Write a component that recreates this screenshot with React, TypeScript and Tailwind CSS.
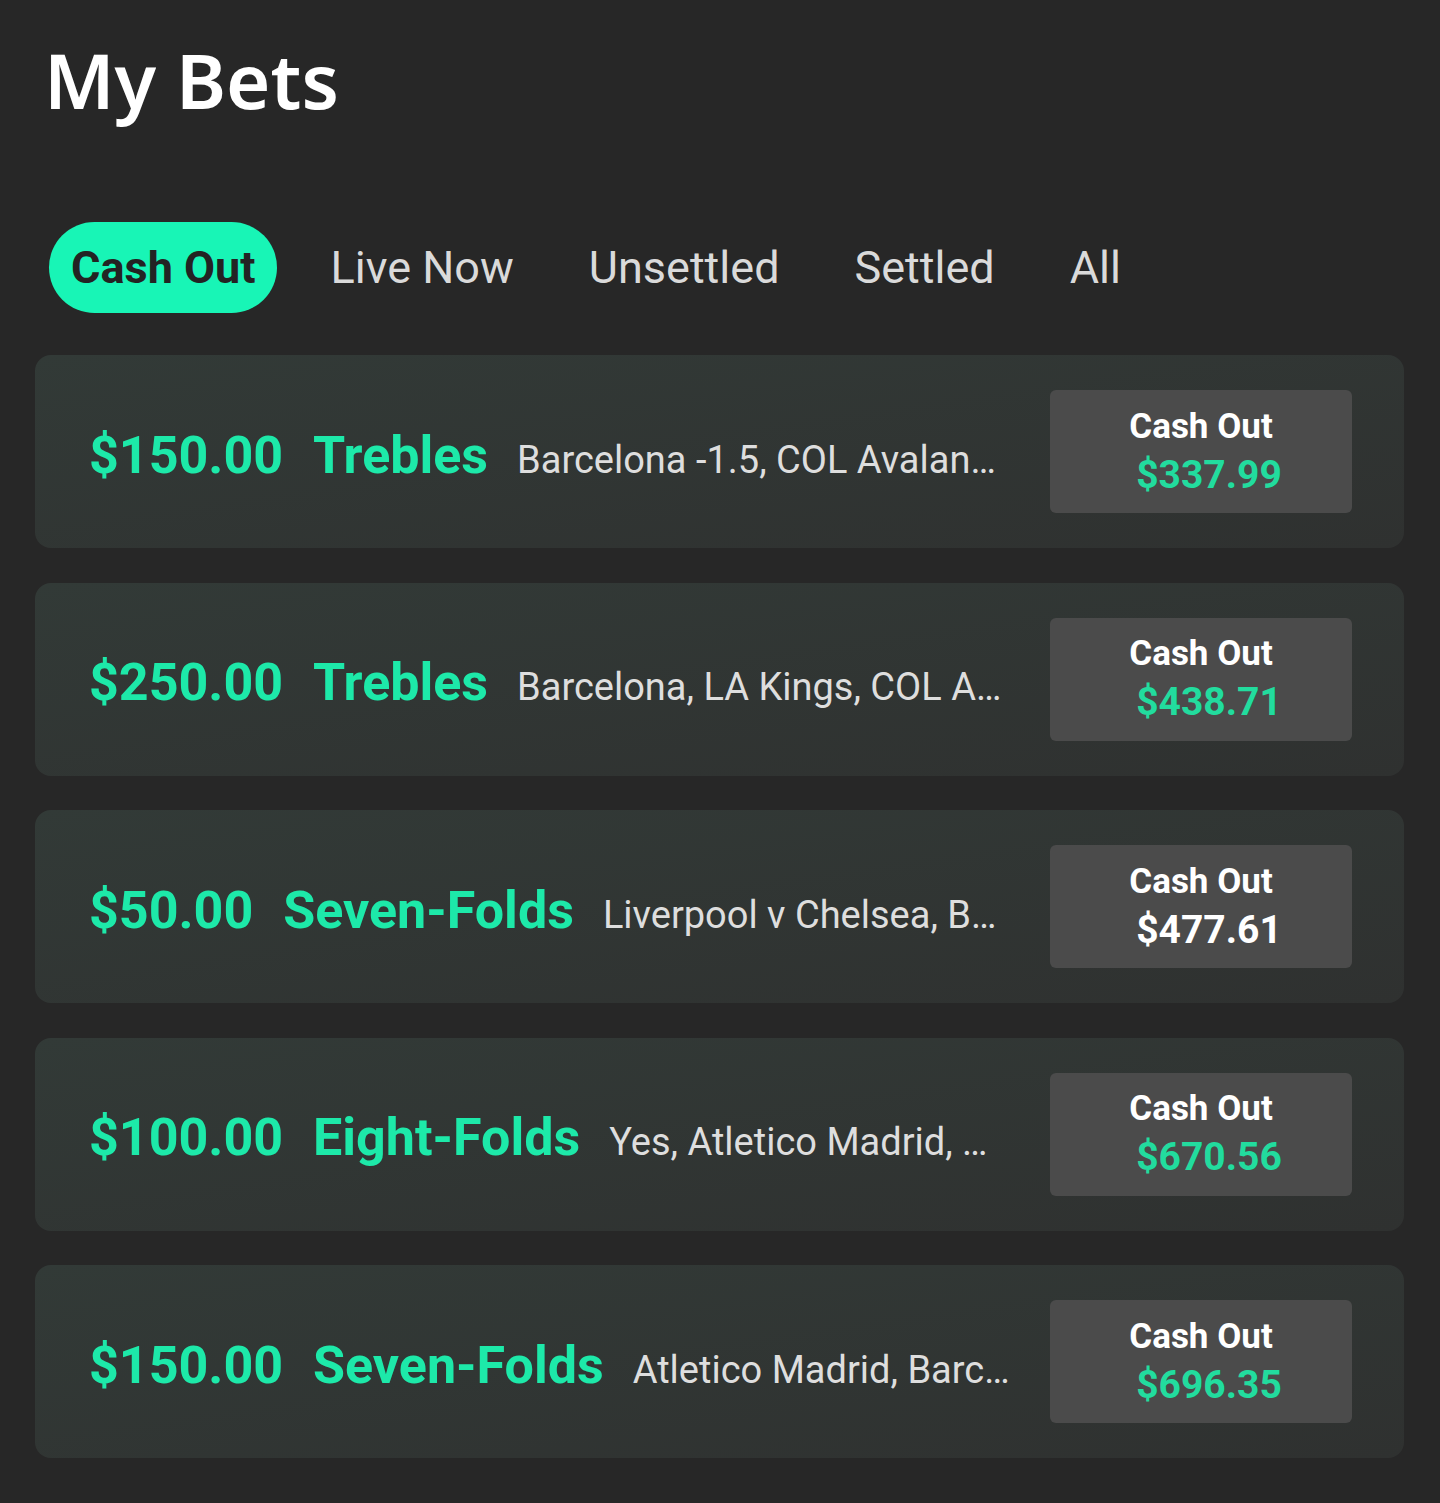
const tabs = ["Cash Out", "Live Now", "Unsettled", "Settled", "All"];

const bets = [
  { stake: "$150.00", type: "Trebles", legs: "Barcelona -1.5, COL Avalan…", cashOut: "$337.99", green: true },
  { stake: "$250.00", type: "Trebles", legs: "Barcelona, LA Kings, COL A…", cashOut: "$438.71", green: true },
  { stake: "$50.00", type: "Seven-Folds", legs: "Liverpool v Chelsea, B…", cashOut: "$477.61", green: false },
  { stake: "$100.00", type: "Eight-Folds", legs: "Yes, Atletico Madrid, …", cashOut: "$670.56", green: true },
  { stake: "$150.00", type: "Seven-Folds", legs: "Atletico Madrid, Barc…", cashOut: "$696.35", green: true },
];

export default function App() {
  return (
    <div className="min-h-[1503px] w-full bg-[#272727] font-['Roboto',sans-serif]">
      {/* Header */}
      <h1 className="pl-[44px] pt-[42px] font-['Noto_Sans',sans-serif] text-[76px] font-semibold leading-none text-white">
        My Bets
      </h1>

      {/* Tabs */}
      <div className="mt-[104px] flex items-center gap-[31px] pl-[49px]">
        {tabs.map((tab, i) =>
          i === 0 ? (
            <span
              key={tab}
              className="flex h-[91px] items-center rounded-full bg-[#18f5b6] px-[22px] text-[45px] font-bold text-[#232323]"
            >
              {tab}
            </span>
          ) : (
            <span key={tab} className="flex h-[91px] items-center px-[22px] text-[45px] text-[#dadada]">
              {tab}
            </span>
          )
        )}
      </div>

      {/* Bet cards */}
      <div className="mt-[42px] flex flex-col gap-[34.5px] pl-[35px] pr-[36px]">
        {bets.map((bet) => (
          <div
            key={bet.stake + bet.type}
            className="flex items-center rounded-2xl bg-linear-to-br from-[#323a37] to-[#2f3130] py-[35px] pl-[54px] pr-[52px]"
          >
            <div className="flex min-w-0 flex-1 items-baseline whitespace-nowrap pt-[8px]">
              <span className="text-[52px] font-bold text-[#1de9a9]">{bet.stake}</span>
              <span className="ml-[30px] text-[52px] font-bold text-[#1de9a9]">{bet.type}</span>
              <span className="ml-[29px] text-[38px] text-[#dedede]">{bet.legs}</span>
            </div>
            <div className="flex h-[123px] w-[302px] shrink-0 flex-col items-center justify-center gap-[12px] rounded-md bg-[#4b4b4b] leading-none">
              <span className="text-[35px] font-bold text-white">Cash Out</span>
              <span className={`pl-[16px] text-[39px] font-bold ${bet.green ? "text-[#22dc9e]" : "text-white"}`}>
                {bet.cashOut}
              </span>
            </div>
          </div>
        ))}
      </div>
    </div>
  );
}
